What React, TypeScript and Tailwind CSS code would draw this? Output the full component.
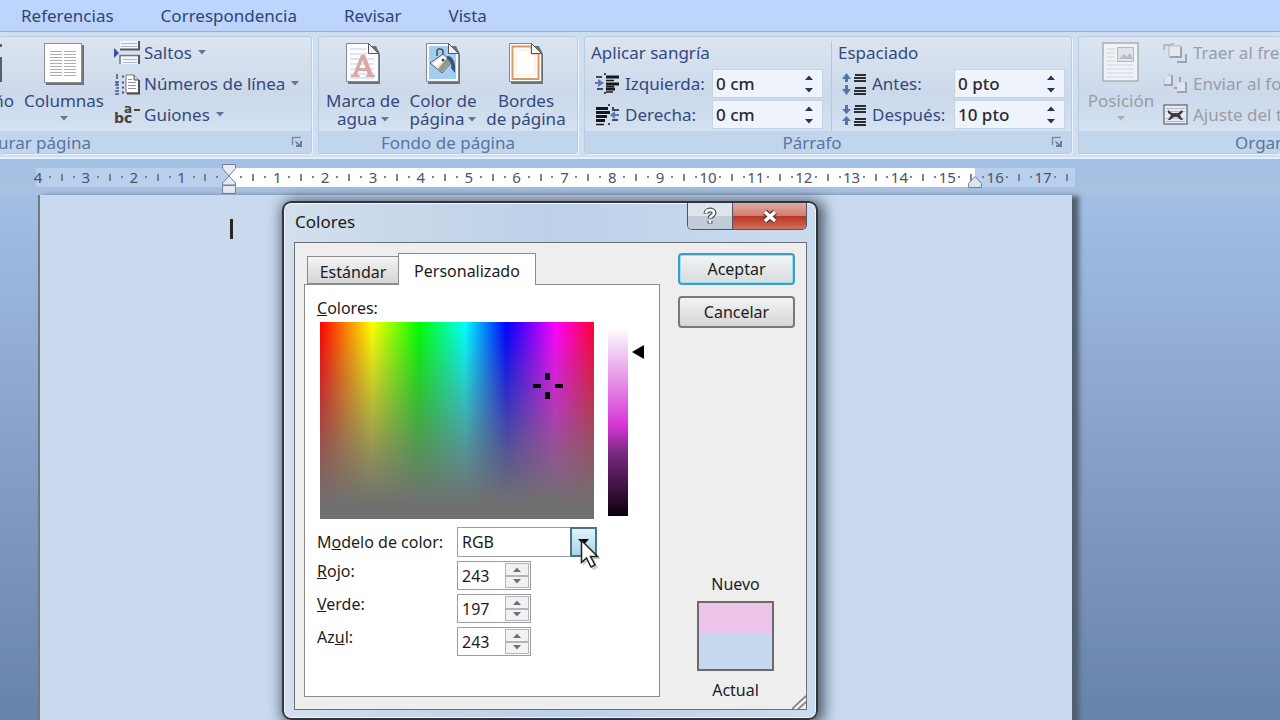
import { useState } from "react";
import type { ReactNode } from "react";

const TABS = ["Referencias", "Correspondencia", "Revisar", "Vista"];
const RULER = [4, 3, 2, 1, 0, 1, 2, 3, 4, 5, 6, 7, 8, 9, 10, 11, 12, 13, 14, 15, 16, 17];

function Caret({ className = "" }: { className?: string }) {
    return (
        <svg width="8" height="5" viewBox="0 0 8 5" className={`shrink-0 ${className}`}>
            <path d="M0 0h8L4 4.5z" fill="currentColor" />
        </svg>
    );
}

function ColumnsIcon() {
    return (
        <svg width="42" height="43" viewBox="0 0 42 43">
            <path d="M3 3h38v40H3z" fill="#6f7478" />
            <rect x="1.5" y="1.5" width="37" height="39" fill="#fdfdfe" stroke="#8b8f96" />
            {[9, 12, 15, 18, 21, 24, 27, 30, 33].map((y) => (
                <path key={y} d={`M7 ${y}.5h12M21 ${y}.5h12`} stroke="#a9adb5" />
            ))}
        </svg>
    );
}

function BreaksIcon() {
    return (
        <svg width="27" height="24" viewBox="0 0 27 24">
            <path d="M0 7l5 5-5 5z" fill="#3a51a3" />
            <path d="M6 0h19v8H6z" fill="#f2f5fa" />
            <path d="M7 2.500h16M7 5.500h16" stroke="#b4bac4" />
            <path d="M25 0v8.500H6" fill="none" stroke="#53575f" strokeWidth="2" />
            <path d="M6 15h19v8H6z" fill="#f2f5fa" />
            <path d="M6 23v-8.500h19" fill="none" stroke="#6e747e" strokeWidth="1.500" />
            <path d="M25 14v9" stroke="#53575f" strokeWidth="2" />
            <path d="M9 18.500h14M9 21.500h14" stroke="#b4bac4" />
        </svg>
    );
}

function LineNumbersIcon() {
    return (
        <svg width="27" height="22" viewBox="0 0 27 22">
            <path d="M3 1v5M1 9h4M1 12h4M2 15h3M1 18h4M1 21h4M3 9v3" stroke="#3e5585" strokeWidth="1.500" />
            <path d="M8 3.500h2M8 9.500h2M8 14.500h2M8 19.500h2" stroke="#3e5585" strokeWidth="2" />
            <path d="M12 2h8l5 5v13H12z" fill="#fff" stroke="#74777c" />
            <path d="M25 7v13.500H13" fill="none" stroke="#4a4d51" strokeWidth="2" />
            <path d="M20 2v5h5" fill="#d2d6dc" stroke="#4a4d51" />
            <path d="M14 6.500h4M14 9.500h8M14 12.500h8M14 15.500h8" stroke="#8e949e" />
        </svg>
    );
}

function HyphenIcon() {
    return (
        <svg width="27" height="20" viewBox="0 0 27 20" fontFamily="DejaVu Sans" fontWeight="bold" fill="#4a4540">
            <text x="0" y="18" fontSize="14">bc</text>
            <text x="10" y="8" fontSize="12">a</text>
            <path d="M20 4h6v2h-6z" />
        </svg>
    );
}

function PageShape({ children, fill = "#fbfcfe" }: { children?: ReactNode; fill?: string }) {
    return (
        <svg width="36" height="43" viewBox="0 0 36 43">
            <path d="M3 4h28l4 8v30H3z" fill="#6e7074" />
            <path d="M1.500 1.500h22l10 10v28h-32z" fill={fill} stroke="#85888d" />
            {children}
            <path d="M23.500 1.500v10h10z" fill="#eef1f5" stroke="#55585d" />
        </svg>
    );
}

function WatermarkIcon() {
    return (
        <PageShape>
            <path d="M5 7h16M5 12h17M5 17h24M5 22h24M5 27h24M5 32h24M5 36h24" stroke="#c9ccd2" />
            <path
                d="M16 13h4l8 20h2v2h-9v-2h2l-1.500-4h-8L12 33h2.500v2H6v-2h2zM14.500 26h6L17.500 18z"
                fill="#dba7a5"
                fillRule="evenodd"
            />
        </PageShape>
    );
}

function PageColorIcon() {
    return (
        <PageShape fill="#f5f9fd">
            <path d="M4 4h19v8h8v25H4z" fill="#a4cdf2" />
            <path d="M12 14V9c0-3 6-3 6 1v8" fill="none" stroke="#494c50" strokeWidth="1.500" />
            <path d="M5 21l13-9 9 8-10 11z" fill="#e3e5dc" stroke="#5d6267" />
            <path d="M8 21l10-7 3 3-10 8z" fill="#fff" />
            <path d="M17 30l9-10-4-4-9 11z" fill="#93978f" />
            <path d="M22 14c6 0 9 6 8 17l-4-5c1-4-1-7-4-9z" fill="#34557c" />
            <circle cx="18" cy="18" r="1.500" fill="#45484c" />
        </PageShape>
    );
}

function BordersIcon() {
    return (
        <PageShape>
            <path d="M4.500 4.500h19v7h7v25.500h-26z" fill="#fffefd" stroke="#d89a62" strokeWidth="2" />
            <path d="M8 8h15v5h4v20H8z" fill="none" stroke="#f6e8d8" />
        </PageShape>
    );
}

function IndentIcon({ right = false }: { right?: boolean }) {
    return right ? (
        <svg width="25" height="22" viewBox="0 0 25 22">
            <path d="M1 4.500h12M1 8.500h14M1 12.500h11M1 16.500h9" stroke="#16181b" strokeWidth="3" />
            <path d="M1 20.500h8M13 1h2M17 4h2M17 16h6M13 20h2M17 6h7" stroke="#16181b" strokeWidth="1.500" />
            <path d="M24 11h-7" stroke="#5d76b2" strokeWidth="2" />
            <path d="M15 11l5-4v8z" fill="#5d76b2" />
        </svg>
    ) : (
        <svg width="25" height="22" viewBox="0 0 25 22">
            <path d="M11 4h13M11 11h13M11 16h9" stroke="#16181b" strokeWidth="3" />
            <path d="M11 7.500h8M11 13.500h8M1 4h6M2 16h6M9 1h2M9 20h2M11 19h7" stroke="#16181b" strokeWidth="1.500" />
            <path d="M0 10h5" stroke="#5d76b2" strokeWidth="2" />
            <path d="M9 10L3 6v8z" fill="#5d76b2" />
        </svg>
    );
}

function SpacingIcon({ after = false }: { after?: boolean }) {
    return (
        <svg width="25" height="22" viewBox="0 0 25 22">
            <path d="M13 2h11M12 5h12M12 8h12M13 15h11M12 18h12M12 21h12" stroke="#2a2d31" strokeWidth="2" />
            {after ? (
                <path d="M3 1h3v4h3L4.500 10 0 5h3zM3 21h3v-4h3l-4.500-5L0 17h3z" fill="#5674a8" />
            ) : (
                <path d="M3 9h3V6h3L4.500 0 0 6h3zM3 12h3v4h3l-4.500 6L0 16h3z" fill="#5674a8" />
            )}
        </svg>
    );
}

function PositionIcon() {
    return (
        <svg width="38" height="41" viewBox="0 0 38 41">
            <rect x="1" y="1" width="35" height="38" fill="#f0f3f8" stroke="#a9aeb8" strokeWidth="1.500" />
            <path d="M4 7h9M4 11h9M4 15h9M4 19h9M4 23h28M4 27h28M4 31h28M4 35h28" stroke="#d0d5de" />
            <rect x="15.500" y="5.500" width="16" height="14" fill="#dfe3ea" stroke="#b4b9c3" />
            <path d="M17 17l5-5 3 3 3-4 3 6z" fill="#b7bcc6" />
        </svg>
    );
}

function ArrangeIcon({ back = false }: { back?: boolean }) {
    return (
        <svg width="25" height="20" viewBox="0 0 25 20">
            {back ? (
                <>
                    <path d="M1 3h8v8H1zM14 9h9v9h-9z" fill="#dfe4ec" />
                    <path d="M9 1v10H1M23 8v10h-9M17 3v5M11 14h3" fill="none" stroke="#9ea3ac" strokeWidth="2" />
                    <path d="M1 11V4M5 1h4" stroke="#b9bec8" />
                </>
            ) : (
                <>
                    <path d="M6 3h12v11H6z" fill="#e6eaf0" stroke="#b0b5be" />
                    <path d="M18 4v10H7M23 11v8h-9" fill="none" stroke="#9ea3ac" strokeWidth="2" />
                    <path d="M1 2h7M1 2v5M8 1h3" stroke="#a7acb6" strokeWidth="1.500" />
                </>
            )}
        </svg>
    );
}

function WrapIcon() {
    return (
        <svg width="25" height="21" viewBox="0 0 25 21">
            <rect x="1" y="1" width="23" height="19" fill="#e9ecf2" stroke="#767b85" strokeWidth="1.500" />
            <path d="M3 4.500h19M3 7.500h19M3 14.500h19M3 17.500h19" stroke="#b5bac3" />
            <path d="M5 6l4 3h6l4-3 1 2-3 3 3 5h-2l-4-3h-3l-4 3H5l3-5-3-2z" fill="#3c4046" />
        </svg>
    );
}

function LauncherIcon() {
    return (
        <svg width="13" height="12" viewBox="0 0 13 12">
            <path d="M1.500 9V1.500H10" fill="none" stroke="#7b8ba6" strokeWidth="1.500" />
            <path d="M5 5l4 3.500V5h2v6H5V9h2L4 6z" fill="#6b7a94" />
        </svg>
    );
}

interface GroupProps {
    title: string;
    className: string;
    labelClass?: string;
    launcher?: boolean;
    children: ReactNode;
}

function Group({ title, className, labelClass = "justify-center", launcher, children }: GroupProps) {
    return (
        <section
            className={`relative flex h-[118px] flex-col overflow-hidden rounded-[3px] border border-[#bccbe0] bg-linear-to-b from-[#dce5f1] via-[#ccd9ea] to-[#d9e6f6] shadow-[1px_1px_0_#eaf3fd] ${className}`}
        >
            <div className="flex min-h-0 flex-1">{children}</div>
            <h2 className={`flex h-[22px] shrink-0 items-center whitespace-nowrap bg-[#c1d6ed] pt-[2px] text-[17px] text-[#5b74a0] ${labelClass}`}>
                {title}
            </h2>
            {launcher && (
                <button type="button" aria-label={`Más opciones de ${title}`} className="absolute bottom-[5px] right-[7px]">
                    <LauncherIcon />
                </button>
            )}
        </section>
    );
}

interface BigButtonProps {
    icon: ReactNode;
    lines: string[];
    caret?: boolean;
    className?: string;
}

function BigButton({ icon, lines, caret, className = "" }: BigButtonProps) {
    return (
        <button type="button" className={`flex shrink-0 flex-col items-center pt-[5px] text-[17px] leading-[18px] ${className}`}>
            <span className="mb-[7px] flex h-[43px] items-start">{icon}</span>
            {lines.map((line, i) => (
                <span key={line} className="flex items-center gap-1 whitespace-nowrap">
                    {line}
                    {caret && i === 1 && <Caret className="opacity-70" />}
                </span>
            ))}
            {caret && lines.length === 1 && <Caret className="mt-[6px] opacity-70" />}
        </button>
    );
}

function SmallButton({ icon, label, caret }: { icon: ReactNode; label: string; caret?: boolean }) {
    return (
        <button type="button" className="flex h-[31px] items-center gap-[2px] whitespace-nowrap text-[17px]">
            <span className="flex w-7 shrink-0 items-center">{icon}</span>
            {label}
            {caret && <Caret className="ml-1 opacity-70" />}
        </button>
    );
}

interface SpinProps {
    id: string;
    label: string;
    icon: ReactNode;
    initial: string;
    labelClass: string;
}

function RibbonSpin({ id, label, icon, initial, labelClass }: SpinProps) {
    const [value, setValue] = useState(initial);

    return (
        <div className="flex h-[31px] items-center">
            <span className="flex w-[30px] shrink-0 items-center">{icon}</span>
            <label htmlFor={id} className={`shrink-0 whitespace-nowrap ${labelClass}`}>{label}</label>
            <div className="flex h-[29px] w-[111px] items-center border border-[#c3d3ea] bg-[#eff4fc]">
                <input
                    id={id}
                    value={value}
                    onChange={(e) => setValue(e.target.value)}
                    className="min-w-0 flex-1 bg-transparent pl-[3px] text-[17px] font-medium text-[#2a2a30] outline-none"
                />
                <div className="flex w-[26px] flex-col items-center gap-2 text-[#27345c]">
                    <button type="button" aria-label={`Aumentar ${label}`}><Caret className="block rotate-180" /></button>
                    <button type="button" aria-label={`Reducir ${label}`}><Caret className="block" /></button>
                </div>
            </div>
        </div>
    );
}

function Ribbon() {
    return (
        <div className="flex shrink-0 gap-[6px] overflow-hidden border-b-2 border-t border-b-[#e2effc] border-t-[#8db0e0] bg-[#cfdff2] pb-[3px] pt-1 text-[#34497d]">
            <Group title="Configurar página" className="w-[312px] shrink-0 border-l-0" labelClass="justify-end pr-[220px]" launcher>
                <button type="button" className="flex w-[14px] shrink-0 flex-col items-end pt-[5px] text-[17px] leading-[18px]">
                    <svg width="4" height="43" viewBox="0 0 4 43" className="mb-[7px] mr-[10px]">
                        <path d="M0 2h2v3H0zM0 15h2v25H0z" fill="#5a5f69" />
                    </svg>
                    <span>Tamaño</span>
                </button>
                <BigButton icon={<ColumnsIcon />} lines={["Columnas"]} caret className="w-[100px]" />
                <div className="flex flex-col">
                    <SmallButton icon={<BreaksIcon />} label="Saltos" caret />
                    <SmallButton icon={<LineNumbersIcon />} label="Números de línea" caret />
                    <SmallButton icon={<HyphenIcon />} label="Guiones" caret />
                </div>
            </Group>

            <Group title="Fondo de página" className="w-[260px] shrink-0" labelClass="justify-center">
                <BigButton icon={<WatermarkIcon />} lines={["Marca de", "agua"]} caret className="ml-1 w-20" />
                <BigButton icon={<PageColorIcon />} lines={["Color de", "página"]} caret className="w-20" />
                <BigButton icon={<BordersIcon />} lines={["Bordes", "de página"]} className="w-[86px]" />
            </Group>

            <Group title="Párrafo" className="w-[488px] shrink-0" labelClass="justify-center pr-8" launcher>
                <div className="ml-1 mt-1 flex w-[243px] shrink-0 flex-col border-r border-[#b4c5dd] pl-[2px] text-[17px]">
                    <h3 className="flex h-6 items-center">Aplicar sangría</h3>
                    <div className="pl-1 pt-[3px]">
                        <RibbonSpin id="izquierda" label="Izquierda:" icon={<IndentIcon />} initial="0 cm" labelClass="w-[87px]" />
                        <RibbonSpin id="derecha" label="Derecha:" icon={<IndentIcon right />} initial="0 cm" labelClass="w-[87px]" />
                    </div>
                </div>
                <div className="mt-1 flex flex-col pl-[6px] text-[17px]">
                    <h3 className="flex h-6 items-center">Espaciado</h3>
                    <div className="pl-1 pt-[3px]">
                        <RibbonSpin id="antes" label="Antes:" icon={<SpacingIcon />} initial="0 pto" labelClass="w-[82px]" />
                        <RibbonSpin id="despues" label="Después:" icon={<SpacingIcon after />} initial="10 pto" labelClass="w-[82px]" />
                    </div>
                </div>
            </Group>

            <Group title="Organizar" className="min-w-[202px] flex-1 border-r-0" labelClass="pl-[156px]">
                <div className="flex text-[#9a9ca6]">
                    <BigButton icon={<PositionIcon />} lines={["Posición"]} caret className="w-[84px]" />
                    <div className="flex flex-col">
                        <SmallButton icon={<ArrangeIcon />} label="Traer al frente" />
                        <SmallButton icon={<ArrangeIcon back />} label="Enviar al fondo" />
                        <SmallButton icon={<WrapIcon />} label="Ajuste del texto" />
                    </div>
                </div>
            </Group>
        </div>
    );
}

function Ruler() {
    return (
        <div className="relative flex h-9 shrink-0 items-center overflow-hidden bg-linear-to-b from-[#a3bfe3] to-[#a9c1e2] pl-9">
            <div className="h-[19px] w-[193px] bg-[#b9cfee]" />
            <div className="h-[19px] w-[746px] bg-white" />
            <div className="h-[19px] w-[100px] bg-[#b9cfee]" />
            <div className="absolute inset-y-0 left-8 flex w-[1053px] items-center text-[15px] text-[#4b5368]">
                {RULER.map((n, i) => (
                    <div key={i} className="grid flex-1 grid-cols-4 items-center justify-items-center">
                        <span className="flex w-0 justify-center">{n === 0 ? "" : n}</span>
                        <span className="size-[2px] bg-[#7b8294]" />
                        <span className="h-[7px] w-[2px] bg-[#7b8294]" />
                        {i < RULER.length - 1 ? <span className="size-[2px] bg-[#7b8294]" /> : <span />}
                    </div>
                ))}
            </div>
            <svg width="16" height="32" viewBox="0 0 16 32" className="absolute left-[221px] top-1">
                <path d="M1.500 1.500h13v4L8 13 1.500 5.500zM8 13l6.500 7v2h-13v-2z" fill="#e6eaf1" stroke="#75809a" />
                <path d="M1.500 22.500h13v8h-13z" fill="#e6eaf1" stroke="#75809a" />
            </svg>
            <svg width="16" height="14" viewBox="0 0 16 14" className="absolute left-[967px] top-4">
                <path d="M8 1.500l6.500 7v4h-13v-4z" fill="#dde4ef" stroke="#75809a" />
            </svg>
        </div>
    );
}

function Spectrum() {
    return (
        <div className="relative h-[197px] w-[274px] bg-[linear-gradient(to_right,#f00_0%,#f80_10%,#ff0_19%,#0f0_36%,#0ff_53%,#00f_68%,#f0f_86%,#f03_100%)]">
            <div className="h-full bg-[linear-gradient(to_bottom,#70707000_0%,#70707059_30%,#707070bf_65%,#707070_92%)]" />
            <svg width="32" height="28" viewBox="0 0 32 28" className="absolute left-[212px] top-[50px]">
                <path d="M13 1h5v7h-5zM13 20h5v7h-5zM1 12h8v4H1zM23 12h8v4h-8z" fill="#000" />
            </svg>
        </div>
    );
}

function ChannelRow({ id, label, initial }: { id: string; label: ReactNode; initial: number }) {
    const [value, setValue] = useState(initial);

    return (
        <div className="flex h-[33px] items-start">
            <label htmlFor={id} className="w-[140px] leading-6">{label}</label>
            <div className="mt-[2px] flex h-[29px] w-[74px] items-center border border-[#9c9c9c] bg-white p-px">
                <input
                    id={id}
                    value={value}
                    onChange={(e) => setValue(Number(e.target.value) || 0)}
                    className="min-w-0 flex-1 bg-transparent pl-[3px] outline-none"
                />
                <div className="flex h-full w-6 flex-col text-[#6d6d85]">
                    <button
                        type="button"
                        aria-label="Aumentar"
                        onClick={() => setValue(Math.min(255, value + 1))}
                        className="flex flex-1 items-center justify-center border border-[#b5b5b5] bg-[#f2f2f2]"
                    >
                        <Caret className="rotate-180" />
                    </button>
                    <button
                        type="button"
                        aria-label="Reducir"
                        onClick={() => setValue(Math.max(0, value - 1))}
                        className="flex flex-1 items-center justify-center border border-[#b5b5b5] bg-[#f2f2f2]"
                    >
                        <Caret />
                    </button>
                </div>
            </div>
        </div>
    );
}

function ColorDialog() {
    return (
        <div
            role="dialog"
            aria-label="Colores"
            className="absolute left-[282px] top-[6px] flex h-[519px] w-[536px] flex-col rounded-[9px] border-2 border-[#30353c] bg-linear-to-r from-[#d3dfec] via-[#bcd0e8] to-[#cbdcf0] pb-2 pl-[10px] pr-[9px] text-[16px] text-[#1c1c1c] shadow-[3px_2px_14px_3px_rgba(30,40,60,0.75),inset_0_0_0_1px_#eef5fc]"
        >
            <div className="flex h-[39px] shrink-0 items-start justify-between">
                <h1 className="flex h-[38px] items-center pl-[1px] text-[17px]">Colores</h1>
                <div className="flex h-[27px] overflow-hidden rounded-b-[5px] border border-t-0 border-[#50555e]">
                    <button type="button" aria-label="Ayuda" className="flex w-[45px] items-center justify-center border-r border-[#50555e] bg-linear-to-b from-[#dfe5ec] from-50% to-[#c2ccd8] to-50%">
                        <svg width="16" height="18" viewBox="0 0 16 18">
                            <path d="M4 6.500C4 2 12 2 12 6c0 2.500-4 2.800-4 5.500M8 14v2.500" fill="none" stroke="#4a4f57" strokeWidth="5" />
                            <path d="M4 6C4 2 12 2 12 6c0 2.500-4 2.800-4 5M8 13.500V16" fill="none" stroke="#fff" strokeWidth="2.500" />
                        </svg>
                    </button>
                    <button type="button" aria-label="Cerrar" className="flex w-[73px] items-center justify-center bg-[linear-gradient(to_bottom,#e2aaa1_0%,#d27e70_48%,#b93524_52%,#d0705c_100%)]">
                        <svg width="18" height="15" viewBox="0 0 18 15">
                            <path d="M4 3l10 9M14 3L4 12" stroke="#5e3a38" strokeWidth="6" />
                            <path d="M4 3l10 9M14 3L4 12" stroke="#fff" strokeWidth="3.500" />
                        </svg>
                    </button>
                </div>
            </div>

            <div className="relative flex min-h-0 flex-1 border border-[#6a7078] bg-[#eeeeee] pb-3 pl-[9px] pr-[11px] pt-[10px]">
                <div className="flex w-[356px] flex-col">
                    <div role="tablist" className="flex h-[31px] shrink-0 items-end pl-[3px]">
                        <button type="button" role="tab" aria-selected="false" className="h-7 w-[91px] border border-r-0 border-[#8b8b8b] bg-linear-to-b from-[#f4f4f4] to-[#d6d6d6] pt-[3px]">
                            Estándar
                        </button>
                        <button type="button" role="tab" aria-selected="true" className="relative z-10 -mb-px h-8 w-[138px] border border-b-0 border-[#8b8b8b] bg-white pt-[2px]">
                            Personalizado
                        </button>
                    </div>
                    <div role="tabpanel" className="flex flex-1 flex-col border border-[#8b8b8b] bg-white pl-3">
                        <div className="mt-[11px] leading-6"><u>C</u>olores:</div>
                        <div className="ml-[3px] mt-[2px] flex">
                            <Spectrum />
                            <div className="ml-[14px] mt-[7px] h-[187px] w-5 bg-[linear-gradient(to_bottom,#fff_0%,#f5dcf5_8%,#d633d6_52%,#7a2a80_66%,#0c000c_100%)]" />
                            <svg width="12" height="14" viewBox="0 0 12 14" className="ml-1 mt-[23px]">
                                <path d="M0 7l12-7v14z" />
                            </svg>
                        </div>
                        <div className="mt-2 flex h-8 items-start">
                            <label htmlFor="modelo" className="w-[140px] leading-[30px]">M<u>o</u>delo de color:</label>
                            <div className="relative w-[140px]">
                                <select id="modelo" defaultValue="RGB" className="h-[30px] w-full appearance-none border border-[#9c9c9c] bg-white pl-1 outline-none">
                                    <option>RGB</option>
                                    <option>HSL</option>
                                </select>
                                <span className="pointer-events-none absolute right-0 top-0 flex h-[30px] w-[27px] items-center justify-center border-2 border-[#4b7389] bg-linear-to-b from-[#e2f2fa] to-[#a9d3ea] text-black">
                                    <svg width="11" height="6" viewBox="0 0 11 6">
                                        <path d="M0 0h11L5.500 6z" />
                                    </svg>
                                </span>
                                <svg width="22" height="32" viewBox="0 0 22 32" className="pointer-events-none absolute left-[123px] top-3">
                                    <path d="M3 3v24l5-5 5 9 5-2-4-9h7z" fill="#000" opacity="0.2" />
                                    <path d="M1.500 1.500v22l5-4.500 4.500 9 4-2-4.500-8.500h7z" fill="#fff" stroke="#222" strokeWidth="1.500" />
                                </svg>
                            </div>
                        </div>
                        <ChannelRow id="rojo" label={<><u>R</u>ojo:</>} initial={243} />
                        <ChannelRow id="verde" label={<><u>V</u>erde:</>} initial={197} />
                        <ChannelRow id="azul" label={<>Az<u>u</u>l:</>} initial={243} />
                    </div>
                </div>

                <div className="ml-[18px] flex flex-1 flex-col">
                    <button type="button" className="h-8 rounded-[4px] border-2 border-[#3f9dc4] bg-linear-to-b from-[#f3f5f6] to-[#d8dcdf] shadow-[inset_0_0_0_1px_#9fdcf2]">
                        Aceptar
                    </button>
                    <button type="button" className="mt-[11px] h-8 rounded-[4px] border-2 border-[#77797c] bg-linear-to-b from-[#f3f3f3] to-[#d6d6d6]">
                        Cancelar
                    </button>
                    <div className="mt-auto flex flex-col items-center pr-[2px]">
                        <span className="leading-6">Nuevo</span>
                        <div className="mb-[7px] mt-[5px] flex h-[70px] w-[77px] flex-col border-2 border-[#6b6b70]">
                            <div className="flex-1 bg-[#eec3ea]" />
                            <div className="h-[35px] bg-[#c7d9ee]" />
                        </div>
                        <span className="-mb-[5px] leading-6">Actual</span>
                    </div>
                </div>
                <svg width="14" height="14" viewBox="0 0 14 14" className="absolute bottom-0 right-0">
                    <path d="M0 14L14 1M6 14l8-7" stroke="#85888c" strokeWidth="2" />
                    <path d="M3 14L14 4" stroke="#fff" strokeWidth="1.500" />
                </svg>
            </div>
        </div>
    );
}

export default function App() {
    return (
        <div className="flex h-screen flex-col overflow-hidden bg-[#a3bfe5] font-['Noto_Sans',sans-serif]">
            <nav className="flex h-[31px] shrink-0 items-center gap-[47px] bg-linear-to-b from-[#bdd6fd] to-[#bcd4fa] pl-[21px] text-[17px] text-[#2f4478]">
                {TABS.map((tab) => (
                    <a key={tab} href="#">{tab}</a>
                ))}
            </nav>
            <Ribbon />
            <Ruler />

            <main className="relative min-h-0 flex-1 bg-linear-to-b from-[#a3bfe6] via-[#869fc8] to-[#6883aa] pl-[38px]">
                <div className="h-full w-[1034px] border-l-2 border-[#6d7888] bg-[#c9daee] pl-[190px] pt-6 shadow-[6px_2px_5px_1px_#525e70]">
                    <div className="h-5 w-[3px] bg-[#2b2422]" />
                </div>
                <ColorDialog />
            </main>
        </div>
    );
}
